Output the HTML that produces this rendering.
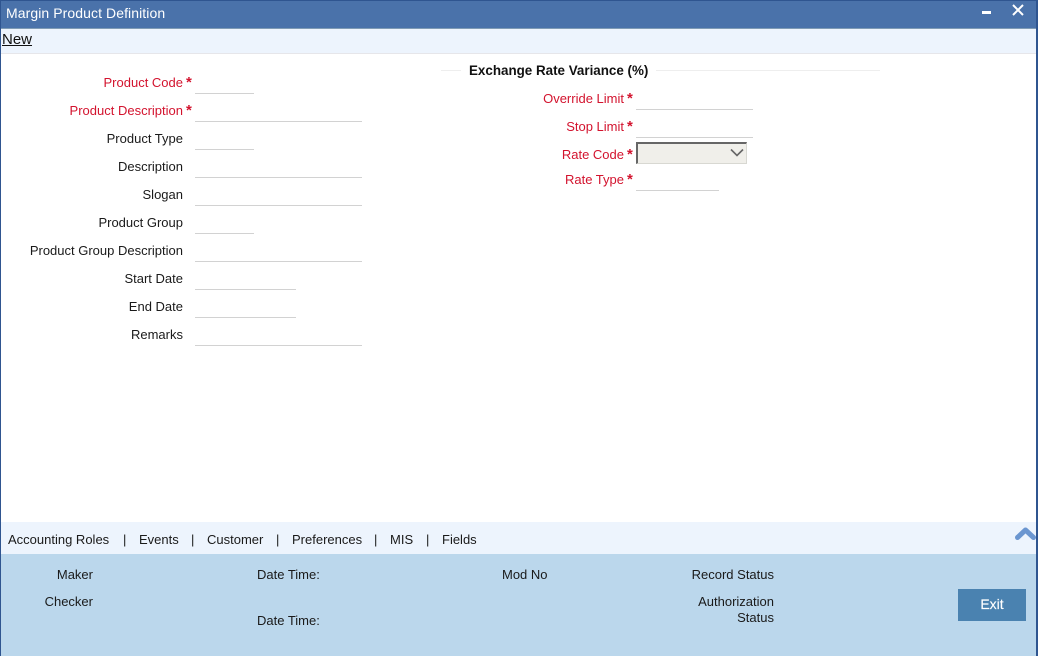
<!DOCTYPE html>
<html><head><meta charset="utf-8"><style>
html,body{margin:0;padding:0;background:#fff}
#p{position:relative;width:1038px;height:658px;overflow:hidden;background:#fff;font:13px/16px "Liberation Sans",sans-serif;color:#1a1a1a}
#p div{position:absolute}
.l{white-space:nowrap;text-align:right}
.r{color:#d3132e}
.s{color:#d3132e;font-size:15px;font-weight:bold;line-height:14px}
.u{height:1px;background:#d2d2d2}
.t{white-space:nowrap;top:532px;font-size:13px}
</style></head><body><div id="p">
<div style="left:0;top:0;width:1038px;height:28px;background:#4a72aa;border-top:1px solid #2f5590;box-sizing:border-box"></div>
<div style="left:0;top:28px;width:1038px;height:1px;background:#7f9bb5"></div>
<div style="left:6px;top:5px;color:#fff;font-size:14px;letter-spacing:.08px;white-space:nowrap">Margin Product Definition</div>
<div style="left:982px;top:11px;width:9px;height:3px;background:#fff"></div>
<svg style="position:absolute;left:1011px;top:3px" width="14" height="14"><path d="M2 2L12 12M12 2L2 12" stroke="#fff" stroke-width="2"/></svg>
<div style="left:0;top:29px;width:1038px;height:24px;background:#edf4fd;border-bottom:1px solid #e6e6ea"></div>
<div style="left:2px;top:32px;font-size:15px;text-decoration:underline;color:#111">New</div>

<div class="l r" style="right:855px;top:75px">Product Code</div><div class="s" style="left:186px;top:76px">*</div><div class="u" style="left:195px;top:93px;width:59px"></div>
<div class="l r" style="right:855px;top:103px">Product Description</div><div class="s" style="left:186px;top:104px">*</div><div class="u" style="left:195px;top:121px;width:167px"></div>
<div class="l" style="right:855px;top:131px">Product Type</div><div class="u" style="left:195px;top:149px;width:59px"></div>
<div class="l" style="right:855px;top:159px">Description</div><div class="u" style="left:195px;top:177px;width:167px"></div>
<div class="l" style="right:855px;top:187px">Slogan</div><div class="u" style="left:195px;top:205px;width:167px"></div>
<div class="l" style="right:855px;top:215px">Product Group</div><div class="u" style="left:195px;top:233px;width:59px"></div>
<div class="l" style="right:855px;top:243px">Product Group Description</div><div class="u" style="left:195px;top:261px;width:167px"></div>
<div class="l" style="right:855px;top:271px">Start Date</div><div class="u" style="left:195px;top:289px;width:101px"></div>
<div class="l" style="right:855px;top:299px">End Date</div><div class="u" style="left:195px;top:317px;width:101px"></div>
<div class="l" style="right:855px;top:327px">Remarks</div><div class="u" style="left:195px;top:345px;width:167px"></div>

<div style="left:441px;top:70px;width:439px;height:1px;background:#eeeeee"></div>
<div style="left:461px;top:63px;padding:0 8px;background:#fff;font-weight:bold;font-size:13.4px;white-space:nowrap;color:#111">Exchange Rate Variance (%)</div>

<div class="l r" style="right:414px;top:91px">Override Limit</div><div class="s" style="left:627px;top:92px">*</div><div class="u" style="left:636px;top:109px;width:117px"></div>
<div class="l r" style="right:414px;top:119px">Stop Limit</div><div class="s" style="left:627px;top:120px">*</div><div class="u" style="left:636px;top:137px;width:117px"></div>
<div class="l r" style="right:414px;top:147px">Rate Code</div><div class="s" style="left:627px;top:148px">*</div>
<div style="left:636px;top:142px;width:111px;height:22px;box-sizing:border-box;background:#f0efea;border:1px solid #d8d8d2;border-top:2px solid #666;border-left:2px solid #666"></div>
<svg style="position:absolute;left:729px;top:147px" width="16" height="12"><path d="M2 2.5L8 8.5L14 2.5" fill="none" stroke="#666" stroke-width="1.6"/></svg>
<div class="l r" style="right:414px;top:172px">Rate Type</div><div class="s" style="left:627px;top:173px">*</div><div class="u" style="left:636px;top:190px;width:83px"></div>

<div style="left:0;top:522px;width:1038px;height:32px;background:#edf4fd"></div>
<div class="t" style="left:8px">Accounting Roles</div>
<div class="t" style="left:123px">|</div>
<div class="t" style="left:139px">Events</div>
<div class="t" style="left:191px">|</div>
<div class="t" style="left:207px">Customer</div>
<div class="t" style="left:276px">|</div>
<div class="t" style="left:292px">Preferences</div>
<div class="t" style="left:374px">|</div>
<div class="t" style="left:390px">MIS</div>
<div class="t" style="left:426px">|</div>
<div class="t" style="left:442px">Fields</div>
<svg style="position:absolute;left:1014px;top:525px" width="22" height="17"><path d="M3.5 12.5L11.5 5L19.5 12.5" fill="none" stroke="#6b96d0" stroke-width="5" stroke-linecap="round" stroke-linejoin="round"/></svg>

<div style="left:0;top:554px;width:1038px;height:102px;background:#bbd7ec"></div>
<div class="l" style="right:945px;top:567px">Maker</div>
<div class="l" style="right:945px;top:594px">Checker</div>
<div class="l" style="left:257px;top:567px">Date Time:</div>
<div class="l" style="left:257px;top:613px">Date Time:</div>
<div class="l" style="left:502px;top:567px">Mod No</div>
<div class="l" style="right:264px;top:567px">Record Status</div>
<div class="l" style="right:264px;top:594px">Authorization</div>
<div class="l" style="right:264px;top:610px">Status</div>
<div style="left:958px;top:589px;width:68px;height:32px;background:#4a82b0;color:#fff;font-size:14px;-webkit-text-stroke:.15px #fff;line-height:31px;text-align:center">Exit</div>

<div style="left:0;top:0;width:1px;height:656px;background:#2f5590"></div>
<div style="left:1036px;top:0;width:2px;height:656px;background:#2f5590"></div>
</div></body></html>
